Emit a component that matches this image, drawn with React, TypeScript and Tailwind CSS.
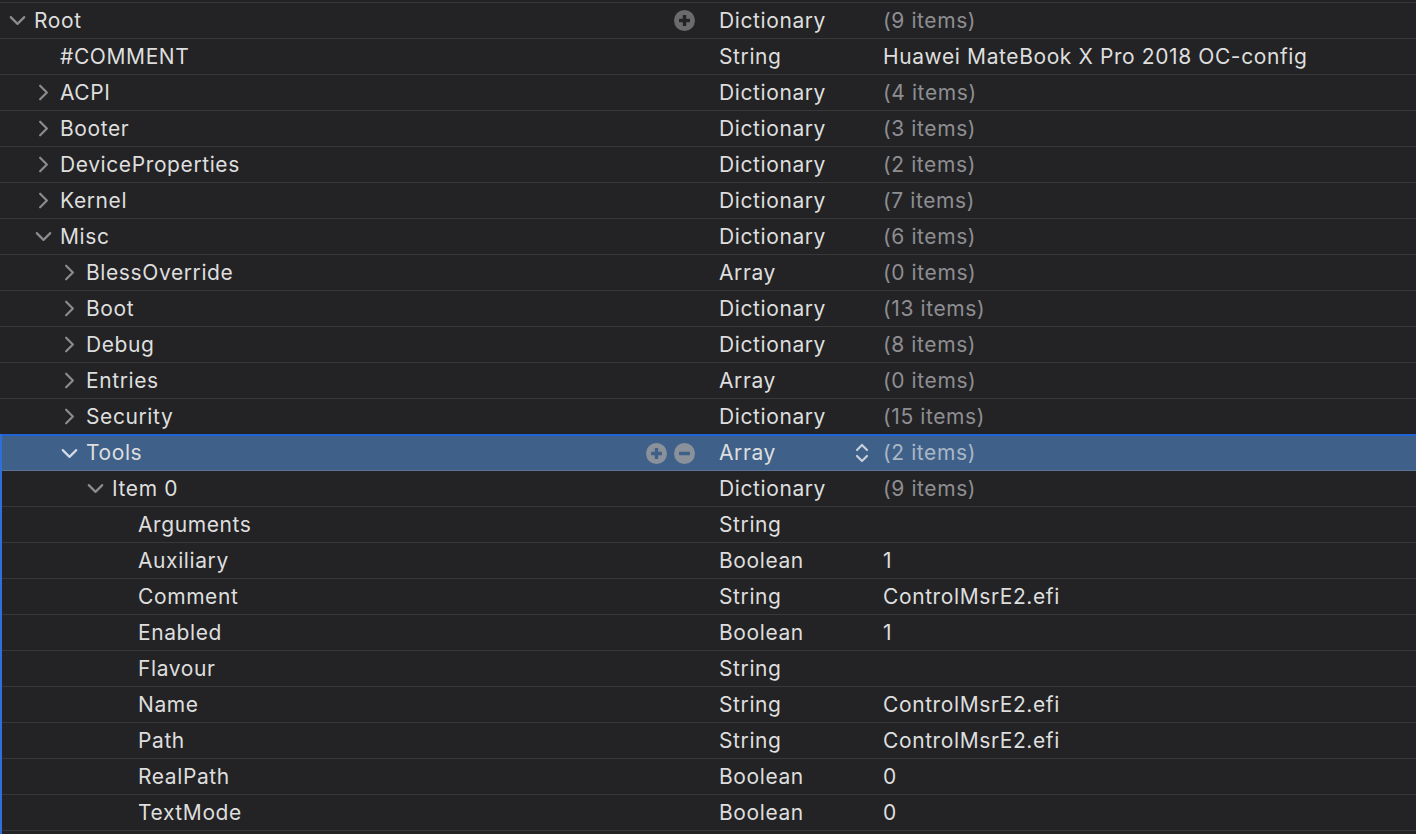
import { ChevronDown, ChevronRight } from "lucide-react";

type Row = {
  key: string;
  level: number;
  open?: boolean;
  leaf?: boolean;
  type: string;
  value: string;
  count?: boolean;
  selected?: boolean;
  plus?: boolean;
};

const rows: Row[] = [
  { key: "Root", level: 0, open: true, type: "Dictionary", value: "(9 items)", count: true, plus: true },
  { key: "#COMMENT", level: 1, leaf: true, type: "String", value: "Huawei MateBook X Pro 2018 OC-config" },
  { key: "ACPI", level: 1, type: "Dictionary", value: "(4 items)", count: true },
  { key: "Booter", level: 1, type: "Dictionary", value: "(3 items)", count: true },
  { key: "DeviceProperties", level: 1, type: "Dictionary", value: "(2 items)", count: true },
  { key: "Kernel", level: 1, type: "Dictionary", value: "(7 items)", count: true },
  { key: "Misc", level: 1, open: true, type: "Dictionary", value: "(6 items)", count: true },
  { key: "BlessOverride", level: 2, type: "Array", value: "(0 items)", count: true },
  { key: "Boot", level: 2, type: "Dictionary", value: "(13 items)", count: true },
  { key: "Debug", level: 2, type: "Dictionary", value: "(8 items)", count: true },
  { key: "Entries", level: 2, type: "Array", value: "(0 items)", count: true },
  { key: "Security", level: 2, type: "Dictionary", value: "(15 items)", count: true },
  { key: "Tools", level: 2, open: true, type: "Array", value: "(2 items)", count: true, selected: true },
  { key: "Item 0", level: 3, open: true, type: "Dictionary", value: "(9 items)", count: true },
  { key: "Arguments", level: 4, leaf: true, type: "String", value: "" },
  { key: "Auxiliary", level: 4, leaf: true, type: "Boolean", value: "1" },
  { key: "Comment", level: 4, leaf: true, type: "String", value: "ControlMsrE2.efi" },
  { key: "Enabled", level: 4, leaf: true, type: "Boolean", value: "1" },
  { key: "Flavour", level: 4, leaf: true, type: "String", value: "" },
  { key: "Name", level: 4, leaf: true, type: "String", value: "ControlMsrE2.efi" },
  { key: "Path", level: 4, leaf: true, type: "String", value: "ControlMsrE2.efi" },
  { key: "RealPath", level: 4, leaf: true, type: "Boolean", value: "0" },
  { key: "TextMode", level: 4, leaf: true, type: "Boolean", value: "0" },
];

function RoundButton({ minus, sel }: { minus?: boolean; sel?: boolean }) {
  const fg = sel ? "#3f6189" : "#242426";
  return (
    <svg width="21" height="21" viewBox="0 0 21 21">
      <circle cx="10.5" cy="10.5" r="10.5" fill={sel ? "#8a919b" : "#6b6b6e"} />
      <rect x="5" y="8.8" width="11" height="3.4" rx="0.6" fill={fg} />
      {!minus && <rect x="8.8" y="5" width="3.4" height="11" rx="0.6" fill={fg} />}
    </svg>
  );
}

function Stepper() {
  return (
    <svg width="16" height="24" viewBox="0 0 16 24" className="text-[#c7d0dc]">
      <path d="M3 9 L8 4 L13 9" fill="none" stroke="currentColor" strokeWidth="2.2" strokeLinecap="round" strokeLinejoin="round" />
      <path d="M3 15 L8 20 L13 15" fill="none" stroke="currentColor" strokeWidth="2.2" strokeLinecap="round" strokeLinejoin="round" />
    </svg>
  );
}

export default function App() {
  return (
    <div
      className="w-[1416px] h-[834px] overflow-hidden bg-[#232325] pt-[2px] text-[21px] tracking-[0.6px] text-[#dedede] relative"
      style={{ fontFamily: "Inter, 'Noto Sans', sans-serif" }}
    >
      <div className="border-t border-[#38383a]">
        {rows.map((r) => (
          <div
            key={r.key}
            className={
              r.selected
                ? "h-[37px] -mt-[1px] flex items-center bg-[#3f6189] border-t-2 border-[#1f63d6] border-b border-b-[#5a7396]"
                : "h-[36px] flex items-center border-b border-[#38383a]"
            }
          >
            <div className="w-[719px] flex items-center pr-[24px]" style={{ paddingLeft: 8 + r.level * 26 }}>
              <span className={r.selected ? "w-[27px] flex justify-center text-[#d3dbe6] -ml-[1px]" : "w-[27px] flex justify-center text-[#8c8c8f] -ml-[1px]"}>
                {r.leaf ? null : r.open ? (
                  <ChevronDown size={27} strokeWidth={1.9} className="-ml-[6px] shrink-0" />
                ) : (
                  <ChevronRight size={27} strokeWidth={1.9} className="-ml-[6px] shrink-0" />
                )}
              </span>
              <span>{r.key}</span>
              {(r.plus || r.selected) && (
                <span className="ml-auto flex items-center gap-[7px]">
                  <RoundButton sel={r.selected} />
                  {r.selected && <RoundButton minus sel />}
                </span>
              )}
            </div>
            <div className="w-[164px] flex items-center pr-[13px]">
              <span>{r.type}</span>
              {r.selected && (
                <span className="ml-auto">
                  <Stepper />
                </span>
              )}
            </div>
            <div className={r.count ? (r.selected ? "text-[#aab6c6]" : "text-[#8e8e92]") : ""}>
              {r.value}
            </div>
          </div>
        ))}
      </div>
      <div className="absolute left-0 top-[434px] bottom-0 w-[2px] bg-[#2f6fd9]" />
    </div>
  );
}
